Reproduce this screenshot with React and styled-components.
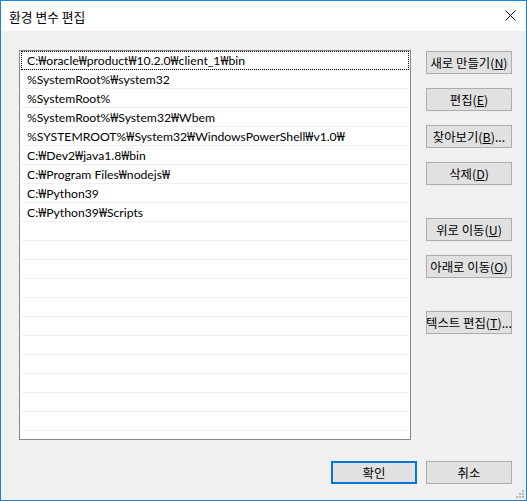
import React from "react";
import styled, { createGlobalStyle } from "styled-components";

const GlobalStyle = createGlobalStyle`
  html, body {
    margin: 0;
    padding: 0;
    background: #f0f0f0;
  }
  body {
    font-family: "Noto Sans CJK KR", "Noto Sans", sans-serif;
    font-size: 12px;
    color: #000;
  }
`;

const paths = [
  "C:₩oracle₩product₩10.2.0₩client_1₩bin",
  "%SystemRoot%₩system32",
  "%SystemRoot%",
  "%SystemRoot%₩System32₩Wbem",
  "%SYSTEMROOT%₩System32₩WindowsPowerShell₩v1.0₩",
  "C:₩Dev2₩java1.8₩bin",
  "C:₩Program Files₩nodejs₩",
  "C:₩Python39",
  "C:₩Python39₩Scripts",
];

const ROW_COUNT = 21;

// the Korean system font draws "\" as ₩; give it its own narrow font
const PathText = ({ text }) =>
  text.split("₩").map((part, i) => (
    <React.Fragment key={i}>
      {i > 0 && <Won>₩</Won>}
      {part}
    </React.Fragment>
  ));

const App = () => {
  const rows = Array.from({ length: ROW_COUNT }, (_, i) => paths[i] || "");

  return (
    <>
      <GlobalStyle />
      <Window>
        <TitleBar>
          <Title>환경 변수 편집</Title>
          <CloseButton aria-label="닫기">
            <svg width="11" height="11" viewBox="0 0 11 11">
              <path d="M0.5 0.5 L10.5 10.5 M10.5 0.5 L0.5 10.5" stroke="#000" strokeWidth="1" fill="none" />
            </svg>
          </CloseButton>
        </TitleBar>

        <Body>
          <Main>
            <List>
              {rows.map((text, i) => (
                <Row key={i} focused={i === 0}>
                  <PathText text={text} />
                </Row>
              ))}
            </List>

            <Side>
              <Group>
                <Button>
                  새로 만들기(<u>N</u>)
                </Button>
                <Button>
                  편집(<u>E</u>)
                </Button>
                <Button>
                  찾아보기(<u>B</u>)...
                </Button>
                <Button>
                  삭제(<u>D</u>)
                </Button>
              </Group>
              <Group>
                <Button>
                  위로 이동(<u>U</u>)
                </Button>
                <Button>
                  아래로 이동(<u>O</u>)
                </Button>
              </Group>
              <Group>
                <Button>
                  텍스트 편집(<u>T</u>)...
                </Button>
              </Group>
            </Side>
          </Main>

          <Footer>
            <Button primary>확인</Button>
            <Button>취소</Button>
          </Footer>
        </Body>

        <Grip width="8" height="8" viewBox="0 0 8 8">
          <rect x="6" y="0" width="2" height="2" fill="#b8b8b8" />
          <rect x="3" y="3" width="2" height="2" fill="#b8b8b8" />
          <rect x="6" y="3" width="2" height="2" fill="#b8b8b8" />
          <rect x="0" y="6" width="2" height="2" fill="#b8b8b8" />
          <rect x="3" y="6" width="2" height="2" fill="#b8b8b8" />
          <rect x="6" y="6" width="2" height="2" fill="#b8b8b8" />
        </Grip>
      </Window>
    </>
  );
};

const Window = styled.div`
  position: relative;
  box-sizing: border-box;
  width: 527px;
  height: 501px;
  border: 1px solid #1883d7;
  background: #f0f0f0;
  display: flex;
  flex-direction: column;
  overflow: hidden;
`;

const TitleBar = styled.div`
  height: 30px;
  flex: none;
  background: #fff;
  display: flex;
  align-items: center;
  justify-content: space-between;
  padding: 0 10px 0 8px;
`;

const Title = styled.div`
  font-size: 12.8px;
  line-height: 16px;
  margin-top: 1px;
`;

const CloseButton = styled.div`
  display: flex;
  align-items: center;
  justify-content: center;
  width: 12px;
  height: 12px;
  margin-top: -1px;
`;

const Body = styled.div`
  flex: 1;
  display: flex;
  flex-direction: column;
  padding: 19px 14px 0 18px;
`;

const Main = styled.div`
  display: flex;
  gap: 15px;
`;

const List = styled.div`
  box-sizing: border-box;
  width: 392px;
  height: 390px;
  border: 1px solid #828790;
  background: #fff;
  overflow: hidden;
`;

const Row = styled.div`
  box-sizing: border-box;
  height: 19px;
  margin: 0 1px;
  padding: 2px 0 0 6px;
  border-bottom: 1px solid #f0f0f0;
  font-family: "Lato", "Noto Sans CJK KR", sans-serif;
  font-size: 12.2px;
  line-height: 16px;
  white-space: nowrap;
  outline: ${(p) => (p.focused ? "1px dotted #000" : "none")};
  outline-offset: -1px;
`;

const Won = styled.span`
  font-family: "Noto Sans", "DejaVu Sans", sans-serif;
  font-size: 12px;
`;

const Side = styled.div`
  display: flex;
  flex-direction: column;
  gap: 33px;
  padding-top: 1px;
`;

const Group = styled.div`
  display: flex;
  flex-direction: column;
  gap: 14px;
`;

const Button = styled.div`
  box-sizing: border-box;
  width: 86px;
  height: 23px;
  display: flex;
  align-items: center;
  justify-content: center;
  background: #e1e1e1;
  border: ${(p) => (p.primary ? "2px solid #0078d7" : "1px solid #adadad")};
  font-size: 12.4px;
  line-height: 14px;
  white-space: nowrap;

  u {
    text-underline-offset: 1px;
  }
`;

const Footer = styled.div`
  display: flex;
  justify-content: flex-end;
  gap: 9px;
  margin-top: 21px;
`;

const Grip = styled.svg`
  position: absolute;
  right: 2px;
  bottom: 2px;
`;

export default App;
